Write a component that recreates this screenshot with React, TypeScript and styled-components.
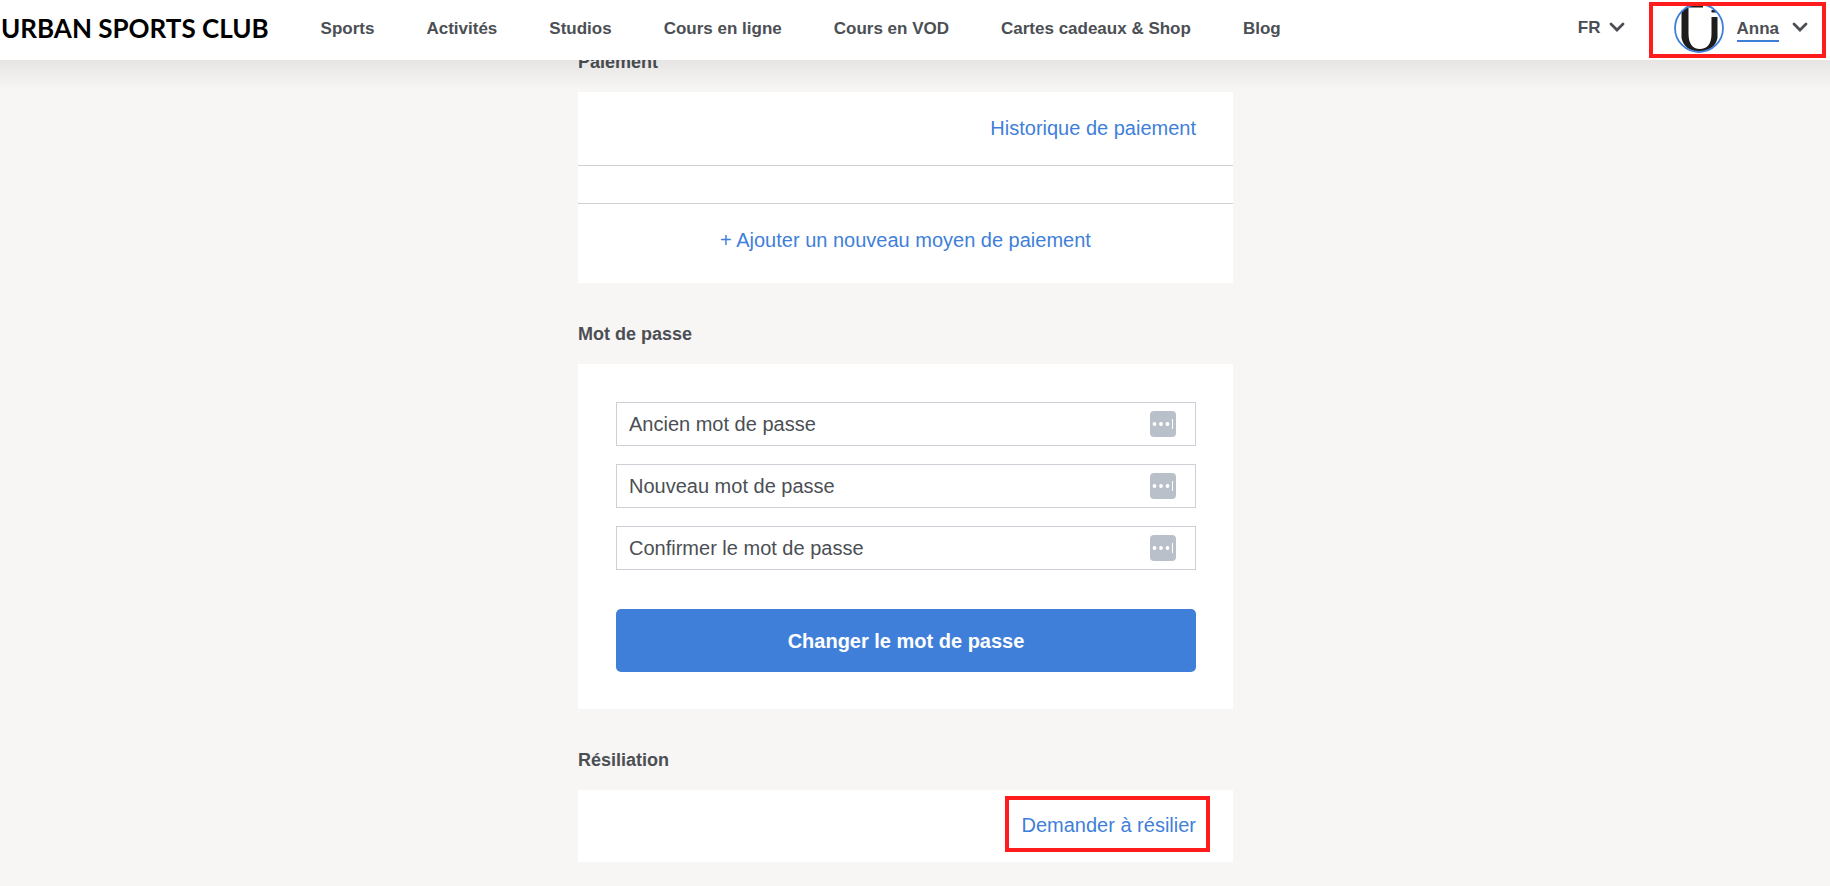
import React from "react";
import styled, { createGlobalStyle } from "styled-components";

const GlobalStyle = createGlobalStyle`
  * { box-sizing: border-box; }
  body {
    margin: 0;
    background: #f7f6f4;
    color: #4b4f54;
    font-family: "Liberation Sans", Arial, sans-serif;
    font-size: 20px;
    line-height: 24px;
  }
`;

const Header = styled.header`
  position: sticky;
  top: 0;
  z-index: 1;
  display: flex;
  align-items: center;
  height: 60px;
  padding: 0 4px 4px 1px;
  background: #fff;
  font-size: 17px;
  font-weight: 700;

  &::after {
    content: "";
    position: absolute;
    top: 100%;
    left: 0;
    right: 0;
    height: 30px;
    background: linear-gradient(rgba(0, 0, 0, 0.07), rgba(0, 0, 0, 0.04) 40%, transparent);
    pointer-events: none;
  }
`;

const Logo = styled.a`
  color: #000;
  font-family: Lato, "Liberation Sans", sans-serif;
  font-size: 26px;
  font-weight: 700;
  white-space: nowrap;
  text-decoration: none;
`;

const Nav = styled.nav`
  display: flex;
  gap: 52px;
  margin-left: 52px;
  padding-top: 2px;
`;

const NavLink = styled.a`
  color: inherit;
  text-decoration: none;
  white-space: nowrap;
`;

const Tools = styled.div`
  display: flex;
  align-items: center;
  gap: 24px;
  margin-left: auto;
`;

const MenuButton = styled.button`
  display: flex;
  align-items: center;
  gap: 8px;
  padding: 0;
  border: 0;
  background: none;
  color: inherit;
  font: inherit;
  cursor: pointer;
`;

const Account = styled(MenuButton)`
  position: relative;
  gap: 13px;
  height: 56px;
  margin-top: 4px;
  padding: 0 18px 4px 25px;

  &::after {
    content: "";
    position: absolute;
    inset: 0;
    border: 4px solid #ff1c1c;
  }
`;

const AccountName = styled.span`
  padding-top: 3px;
  border-bottom: 2px solid #407fd9;
  line-height: 22px;
`;

const Page = styled.div`
  padding-right: 19px;
`;

const Column = styled.main`
  width: 655px;
  max-width: 100%;
  margin: 0 auto;
  padding-bottom: 20px;
`;

const Section = styled.section<{ $first?: boolean }>`
  padding-top: ${(p) => (p.$first ? 0 : 39)}px;
  margin-top: ${(p) => (p.$first ? -10 : 0)}px;
`;

const Title = styled.h2`
  margin: 0 0 18px;
  font-size: 18px;
  line-height: 24px;
`;

const Card = styled.div`
  background: #fff;
`;

const Row = styled.div<{ $align?: string; $size?: number }>`
  display: flex;
  align-items: flex-start;
  justify-content: ${(p) => p.$align || "flex-end"};
  min-height: ${(p) => p.$size || 72}px;
  padding: ${(p) => (p.$size === 38 ? 0 : 24)}px 37px 0;
  & + & { border-top: 1px solid #ced0d4; }
`;

const TextLink = styled.a`
  color: #407fd9;
  text-decoration: none;
`;

const Highlight = styled.div`
  margin: -18px -14px 0 0;
  padding: 13px 10px 11px 12px;
  border: 4px solid #ff1c1c;
`;

const Form = styled.form`
  display: flex;
  flex-direction: column;
  gap: 18px;
  padding: 38px 37px 37px 38px;
`;

const Field = styled.label`
  display: flex;
  align-items: center;
  height: 44px;
  padding: 0 19px 0 12px;
  border: 1px solid #ced0d8;
`;

const Input = styled.input`
  flex: 1;
  min-width: 0;
  padding: 0;
  border: 0;
  outline: 0;
  background: none;
  color: inherit;
  font: inherit;
  &::placeholder { color: #4b4f54; opacity: 1; }
`;

const Submit = styled.button`
  height: 63px;
  margin-top: 21px;
  border: 0;
  border-radius: 5px;
  background: #407fd9;
  color: #fff;
  font: inherit;
  font-weight: 700;
  cursor: pointer;
`;

const ChevronIcon = styled.svg`
  margin-bottom: 3px;
`;

const Chevron = () => (
  <ChevronIcon
    width="16"
    height="12"
    viewBox="0 0 16 12"
    fill="none"
    stroke="#4b4f54"
    strokeWidth="2.800"
    strokeLinecap="round"
    aria-hidden="true"
  >
    <path d="M2 3 8 9l6-6" />
  </ChevronIcon>
);

const Avatar = () => (
  <svg width="50" height="50" viewBox="0 0 50 50" aria-hidden="true">
    <clipPath id="disc">
      <circle cx="25" cy="25" r="24" />
    </clipPath>
    <circle cx="25" cy="25" r="24" fill="#fff" />
    <g clipPath="url(#disc)" fill="#1d1d1b">
      <path d="M7.500 4.500H14.500v26c0 10 4 15.500 11.300 15.500S37.500 41 37.500 31V14H43.500v21c-2 9-9 13.500-18 13.500S9.500 44 7.500 35z" />
      <rect x="15" y="2" width="14" height="2.500" />
      <rect x="37.500" y="7" width="5" height="2.500" />
    </g>
    <circle cx="25" cy="25" r="24" fill="none" stroke="#407fd9" strokeWidth="1.800" />
  </svg>
);

const KeyIcon = () => (
  <svg width="26" height="26" viewBox="0 0 26 26" aria-hidden="true">
    <rect width="26" height="26" rx="4" fill="#b9c0c9" />
    <g fill="#fff">
      <circle cx="4.500" cy="13" r="1.900" />
      <circle cx="11" cy="13" r="1.900" />
      <circle cx="17.500" cy="13" r="1.900" />
      <rect x="22" y="8" width="1" height="10" />
    </g>
  </svg>
);

const links = ["Sports", "Activités", "Studios", "Cours en ligne", "Cours en VOD", "Cartes cadeaux & Shop", "Blog"];
const fields = ["Ancien mot de passe", "Nouveau mot de passe", "Confirmer le mot de passe"];

export default function App() {
  return (
    <>
      <GlobalStyle />
      <Header>
        <Logo href="#">URBAN SPORTS CLUB</Logo>
        <Nav>
          {links.map((l) => <NavLink key={l} href="#">{l}</NavLink>)}
        </Nav>
        <Tools>
          <MenuButton>FR <Chevron /></MenuButton>
          <Account><Avatar /><AccountName>Anna</AccountName><Chevron /></Account>
        </Tools>
      </Header>
      <Page>
        <Column>
          <Section $first>
            <Title>Paiement</Title>
            <Card>
              <Row $size={73}><TextLink href="#">Historique de paiement</TextLink></Row>
              <Row $size={38} />
              <Row $size={80} $align="center"><TextLink href="#">+ Ajouter un nouveau moyen de paiement</TextLink></Row>
            </Card>
          </Section>
          <Section>
            <Title>Mot de passe</Title>
            <Card>
              <Form onSubmit={(e) => e.preventDefault()}>
                {fields.map((f) => (
                  <Field key={f}>
                    <Input type="password" placeholder={f} aria-label={f} />
                    <KeyIcon />
                  </Field>
                ))}
                <Submit>Changer le mot de passe</Submit>
              </Form>
            </Card>
          </Section>
          <Section>
            <Title>Résiliation</Title>
            <Card>
              <Row><Highlight><TextLink href="#">Demander à résilier</TextLink></Highlight></Row>
            </Card>
          </Section>
        </Column>
      </Page>
    </>
  );
}
